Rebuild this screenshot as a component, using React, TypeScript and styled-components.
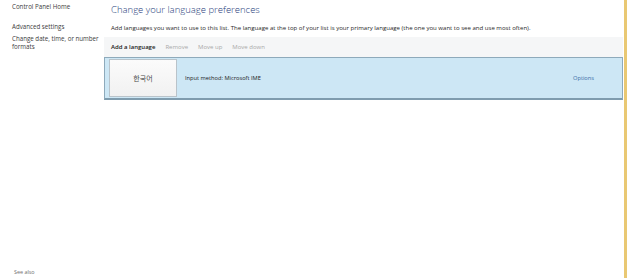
import styled, { createGlobalStyle } from "styled-components";

const GlobalStyle = createGlobalStyle`
    html, body {
        margin: 0;
        padding: 0;
        background: #ffffff;
    }
    body {
        font-family: "Open Sans", "Noto Sans", "Noto Sans CJK KR", sans-serif;
    }
`;

const Window = styled.div`
    width: 627px;
    height: 278px;
    display: flex;
    overflow: hidden;
    background: #fff;
`;

const Sidebar = styled.div`
    width: 104px;
    flex: none;
    display: flex;
    flex-direction: column;
    padding: 3px 0 2px 12px;
    box-sizing: border-box;
`;

const SideLink = styled.div<{ gap?: number }>`
    font-size: 6.2px;
    line-height: 8px;
    color: #3c3c3c;
    margin-bottom: ${p => p.gap ?? 0}px;
`;

const SeeAlso = styled.div`
    margin-top: auto;
    font-size: 5.4px;
    color: #6f6f6f;
    padding-left: 2px;
`;

const Main = styled.div`
    flex: 1;
    display: flex;
    flex-direction: column;
    border-right: 3px solid #e9c873;
    padding-right: 1px;
`;

const Title = styled.h1`
    margin: 0;
    padding: 3px 0 0 7px;
    font-size: 9.5px;
    font-weight: 300;
    line-height: 14px;
    color: #1e3c7a;
`;

const Description = styled.p`
    margin: 0;
    padding: 7px 0 0 7px;
    font-size: 6.05px;
    line-height: 8px;
    color: #1f1f1f;
    white-space: nowrap;
`;

const Toolbar = styled.div`
    margin-top: 5px;
    height: 20px;
    display: flex;
    align-items: center;
    gap: 10px;
    padding-left: 7px;
    background: #f5f6f7;
`;

const ToolButton = styled.span<{ enabled?: boolean }>`
    font-size: 6px;
    font-weight: ${p => (p.enabled ? 600 : 400)};
    color: ${p => (p.enabled ? "#222" : "#a9a9a9")};
`;

const LanguageRow = styled.div`
    height: 43px;
    display: flex;
    align-items: center;
    box-sizing: border-box;
    background: #cde7f5;
    border: 1px solid #8eaabb;
    border-bottom: 2px solid #7f9cae;
    padding: 0 28px 0 4px;
`;

const LanguageTile = styled.div`
    width: 68px;
    height: 38px;
    flex: none;
    display: flex;
    align-items: center;
    justify-content: center;
    background: linear-gradient(#fbfbfb, #f1f1f1);
    border: 1px solid #b9c3ca;
    box-sizing: border-box;
    font-family: "Noto Sans CJK KR", sans-serif;
    font-size: 7px;
    color: #4a4a4a;
`;

const InputMethod = styled.span`
    margin-left: 8px;
    font-size: 5.7px;
    color: #1c1c1c;
    flex: 1;
`;

const OptionsLink = styled.span`
    font-size: 5.7px;
    color: #3b6ea8;
`;

export default function App() {
    return <Window>
        <GlobalStyle />
        <Sidebar>
            <SideLink gap={12}>Control Panel Home</SideLink>
            <SideLink gap={4}>Advanced settings</SideLink>
            <SideLink>Change date, time, or number<br />formats</SideLink>
            <SeeAlso>See also</SeeAlso>
        </Sidebar>
        <Main>
            <Title>Change your language preferences</Title>
            <Description>
                Add languages you want to use to this list. The language at the top of your list is your primary language (the one you want to see and use most often).
            </Description>
            <Toolbar>
                <ToolButton enabled>Add a language</ToolButton>
                <ToolButton>Remove</ToolButton>
                <ToolButton>Move up</ToolButton>
                <ToolButton>Move down</ToolButton>
            </Toolbar>
            <LanguageRow>
                <LanguageTile>한국어</LanguageTile>
                <InputMethod>Input method: Microsoft IME</InputMethod>
                <OptionsLink>Options</OptionsLink>
            </LanguageRow>
        </Main>
    </Window>
}
